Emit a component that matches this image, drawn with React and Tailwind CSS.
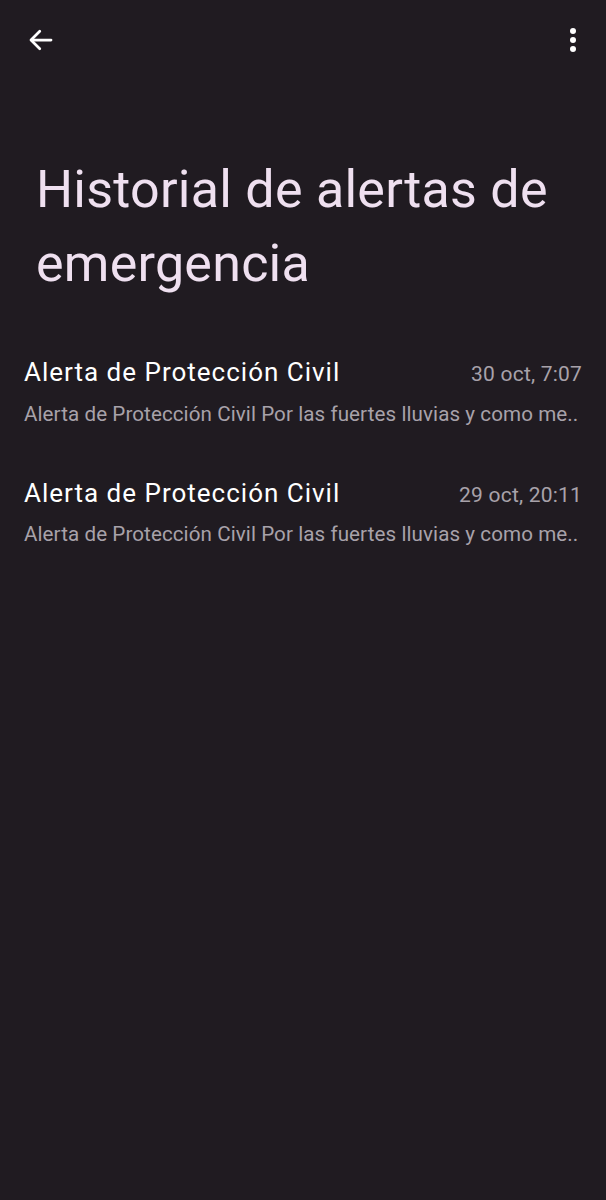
import React from 'react';

const alerts = [
  { title: 'Alerta de Protección Civil', date: '30 oct, 7:07', body: 'Alerta de Protección Civil Por las fuertes lluvias y como me..' },
  { title: 'Alerta de Protección Civil', date: '29 oct, 20:11', body: 'Alerta de Protección Civil Por las fuertes lluvias y como me..' },
];

const App = () => {
  return (
    <div className="w-[606px] h-[1200px] bg-[#201b21] overflow-hidden" style={{ fontFamily: 'Roboto, "Open Sans", sans-serif' }}>
      {/* Top bar */}
      <div className="flex items-center justify-between h-[80px] pl-[26px] pr-[30px]">
        <svg width="30" height="30" viewBox="0 0 24 24" fill="none" stroke="#ffffff" strokeWidth="2.2" strokeLinecap="round" strokeLinejoin="round" className="-mt-[1px]">
          <path d="M20 12H4.5" />
          <path d="M11 5l-7 7 7 7" />
        </svg>
        <div className="flex flex-col items-center gap-[3px] -mt-[1px]">
          <span className="w-[6px] h-[6px] rounded-full bg-white" />
          <span className="w-[6px] h-[6px] rounded-full bg-white" />
          <span className="w-[6px] h-[6px] rounded-full bg-white" />
        </div>
      </div>

      {/* Title */}
      <h1 className="pl-[36px] pr-[20px] pt-[73px] text-[52px] leading-[74px] text-[#efe0f0] font-normal tracking-[0.25px]">
        Historial de alertas de emergencia
      </h1>

      {/* List */}
      <div className="mt-[56px] flex flex-col gap-[52px] px-[24px]">
        {alerts.map((a, i) => (
          <div key={i} className="flex flex-col">
            <div className="flex items-baseline justify-between">
              <span className="text-[26px] leading-[30px] text-white tracking-[1px]">{a.title}</span>
              <span className="text-[21px] text-[#a8a2aa] tracking-[0.2px]">{a.date}</span>
            </div>
            <div className="mt-[11px] text-[20.6px] leading-[24px] text-[#a8a2aa] whitespace-nowrap tracking-[0.08px]">
              {a.body}
            </div>
          </div>
        ))}
      </div>
    </div>
  );
};

export default App;
